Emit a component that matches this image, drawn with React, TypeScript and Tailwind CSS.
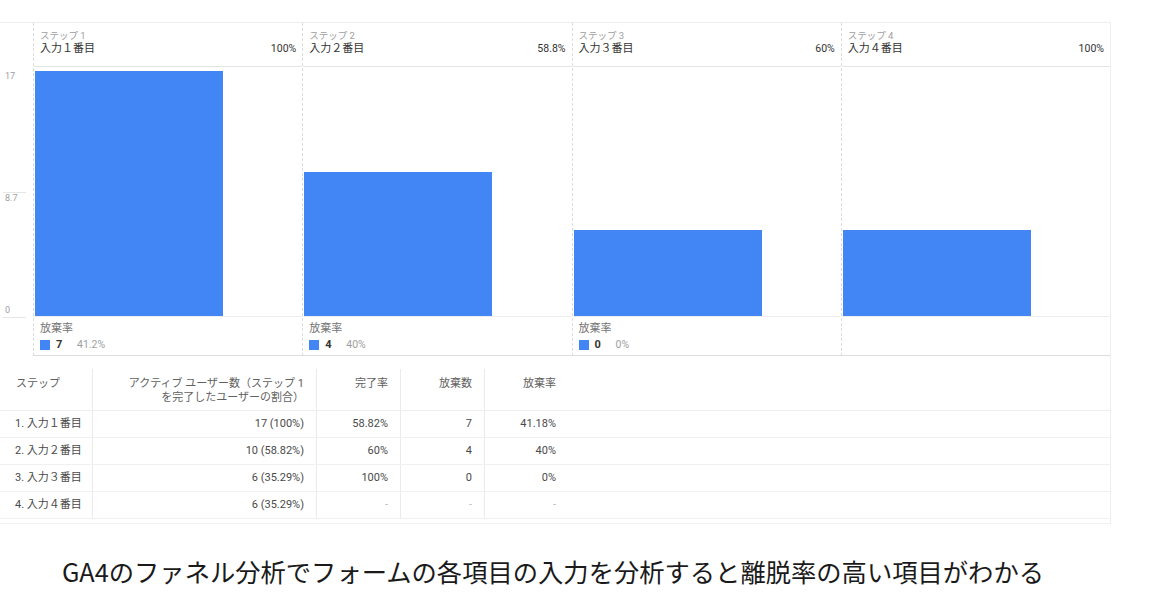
import React from 'react';

type Step = {
  label: string;
  name: string;
  rate: string;
  users: number;
  drop?: { count: string; pct: string };
};

const steps: Step[] = [
  { label: 'ステップ 1', name: '入力１番目', rate: '100%', users: 17, drop: { count: '7', pct: '41.2%' } },
  { label: 'ステップ 2', name: '入力２番目', rate: '58.8%', users: 10, drop: { count: '4', pct: '40%' } },
  { label: 'ステップ 3', name: '入力３番目', rate: '60%', users: 6, drop: { count: '0', pct: '0%' } },
  { label: 'ステップ 4', name: '入力４番目', rate: '100%', users: 6 },
];

const rows = [
  ['1. 入力１番目', '17 (100%)', '58.82%', '7', '41.18%'],
  ['2. 入力２番目', '10 (58.82%)', '60%', '4', '40%'],
  ['3. 入力３番目', '6 (35.29%)', '100%', '0', '0%'],
  ['4. 入力４番目', '6 (35.29%)', '-', '-', '-'],
];

const MAX = 17;
const PLOT_H = 245;

const StepColumn: React.FC<{ step: Step }> = ({ step }) => (
  <div className="flex-1 flex flex-col border-l border-dashed border-[#dcdcdc]">
    <div className="h-[44px] flex flex-col justify-end pb-[10px] pl-[6px] pr-[6px] border-b border-solid border-[#e4e4e4]">
      <div className="text-[9.5px] leading-[12px] text-[#9e9e9e]">{step.label}</div>
      <div className="flex justify-between items-center text-[11px] leading-[14px] text-[#333]">
        <span>{step.name}</span>
        <span className="text-[10.5px]">{step.rate}</span>
      </div>
    </div>
    <div className="h-[250px] flex items-end border-b border-solid border-[#eeeeee]">
      <div
        className="w-[188px] ml-px bg-[#4285f4]"
        style={{ height: (PLOT_H * step.users) / MAX }}
      />
    </div>
    <div className="h-[39px] pl-[6px] pt-[5px] border-b border-solid border-[#dddddd]">
      {step.drop && (
        <>
          <div className="text-[11px] leading-[14px] text-[#757575]">放棄率</div>
          <div className="flex items-center mt-[2px] text-[11px] leading-[14px]">
            <span className="w-[10px] h-[10px] bg-[#4285f4]" />
            <span className="w-[27px] pl-[6px] font-bold text-[#333]">{step.drop.count}</span>
            <span className="text-[#9e9e9e] text-[10.5px]">{step.drop.pct}</span>
          </div>
        </>
      )}
    </div>
  </div>
);

const AxisTick: React.FC<{ top: number; label: string; above?: boolean; line?: boolean }> = ({
  top,
  label,
  above,
  line = true,
}) => (
  <div className="absolute left-0 w-[26px]" style={{ top }}>
    <div className={`h-px ml-[3px] ${line ? 'bg-[#e6e6e6]' : ''}`} />
    <div
      className={`absolute left-[5px] text-[9px] leading-[11px] text-[#9e9e9e] ${above ? '-top-[12px]' : 'top-[1px]'}`}
    >
      {label}
    </div>
  </div>
);

export default function App() {
  return (
    <div className="w-[1156px] h-[610px] bg-white font-['Roboto','Noto_Sans_CJK_JP',sans-serif] overflow-hidden">
      <div className="h-[22px]" />
      <div className="w-[1111px] border-r border-[#efefef]">
        {/* funnel chart */}
        <div className="flex border-t border-[#eeeeee]">
          <div className="w-[33px] relative">
            <AxisTick top={47} label="17" line={false} />
            <AxisTick top={169} label="8.7" />
            <AxisTick top={294} label="0" above />
          </div>
          {steps.map((s) => (
            <StepColumn key={s.label} step={s} />
          ))}
        </div>

        {/* table */}
        <div className="text-[11px] text-[#4a4a4a]">
          <div className="flex h-[55px] pt-[13px] border-b border-[#eeeeee] text-[#616161]">
            <div className="w-[92px] pl-[16px] pt-[8px] leading-[14px]">ステップ</div>
            <div className="w-[224px] border-l border-[#eaeaea] pr-[12px] pt-[8px] text-right leading-[14px]">
              アクティブ ユーザー数（ステップ 1<br />を完了したユーザーの割合）
            </div>
            <div className="w-[84px] border-l border-[#eaeaea] pr-[12px] pt-[8px] text-right leading-[14px]">完了率</div>
            <div className="w-[84px] border-l border-[#eaeaea] pr-[12px] pt-[8px] text-right leading-[14px]">放棄数</div>
            <div className="w-[84px] border-l border-[#eaeaea] pr-[12px] pt-[8px] text-right leading-[14px]">放棄率</div>
          </div>
          {rows.map((r) => (
            <div key={r[0]} className="flex h-[27px] border-b border-[#f0f0f0] items-stretch">
              <div className="w-[92px] pl-[15px] flex items-center">{r[0]}</div>
              {r.slice(1).map((c, i) => (
                <div
                  key={i}
                  className={`${i === 0 ? 'w-[224px]' : 'w-[84px]'} border-l border-[#eaeaea] pr-[12px] flex items-center justify-end ${
                    c === '-' ? 'text-[#bdbdbd]' : ''
                  }`}
                >
                  {c}
                </div>
              ))}
            </div>
          ))}
          <div className="h-[5px] border-b border-[#f0f0f0]" />
        </div>
      </div>

      <div className="pl-[62px] mt-[29px] text-[25.3px] leading-[36px] text-[#1a1a1a] font-['Noto_Sans_CJK_JP',sans-serif]">
        GA4のファネル分析でフォームの各項目の入力を分析すると離脱率の高い項目がわかる
      </div>
    </div>
  );
}
